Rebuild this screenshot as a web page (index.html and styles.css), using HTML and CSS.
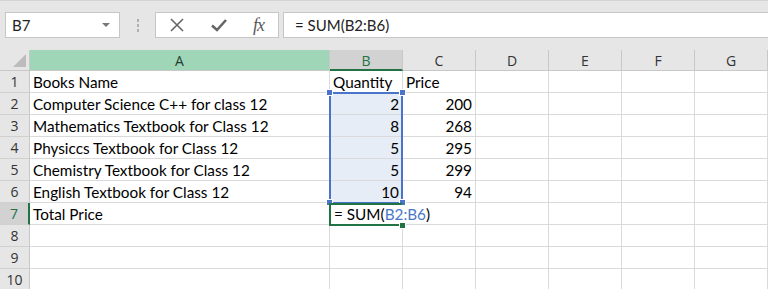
FILE: index.html
```html
<!DOCTYPE html>
<html lang="en">
<head>
	<meta charset="UTF-8">
	<title>Book sheet</title>
	<link rel="stylesheet" href="styles.css">
</head>
<body>

<div class="toolbar">
	<div class="name-box">
		<span>B7</span>
		<span class="drop"></span>
	</div>
	<div class="grip"><i></i><i></i><i></i></div>
	<div class="fx-box">
		<svg width="16" height="16" viewBox="0 0 16 16"><path d="M2 2 L14 14 M14 2 L2 14" stroke="#666" stroke-width="1.6" fill="none"/></svg>
		<svg width="18" height="16" viewBox="0 0 18 16"><path d="M2 8.5 L7 13 L16 3" stroke="#666" stroke-width="2.6" fill="none"/></svg>
		<span class="fx">fx</span>
	</div>
	<div class="formula">= SUM(B2:B6)</div>
</div>

<div class="sheet">
	<div class="grid">
		<!-- header row -->
		<div class="corner"><span class="tri"></span></div>
		<div class="colhead colA">A</div>
		<div class="colhead active">B</div>
		<div class="colhead">C</div>
		<div class="colhead">D</div>
		<div class="colhead">E</div>
		<div class="colhead">F</div>
		<div class="colhead">G</div>

		<div class="rowhead">1</div>
		<div class="cell">Books Name</div>
		<div class="cell">Quantity</div>
		<div class="cell">Price</div>
		<div class="cell"></div><div class="cell"></div><div class="cell"></div><div class="cell"></div>

		<div class="rowhead">2</div>
		<div class="cell">Computer Science C++ for class 12</div>
		<div class="cell num sel">2</div>
		<div class="cell num">200</div>
		<div class="cell"></div><div class="cell"></div><div class="cell"></div><div class="cell"></div>

		<div class="rowhead">3</div>
		<div class="cell">Mathematics Textbook for Class 12</div>
		<div class="cell num sel">8</div>
		<div class="cell num">268</div>
		<div class="cell"></div><div class="cell"></div><div class="cell"></div><div class="cell"></div>

		<div class="rowhead">4</div>
		<div class="cell">Physiccs Textbook for Class 12</div>
		<div class="cell num sel">5</div>
		<div class="cell num">295</div>
		<div class="cell"></div><div class="cell"></div><div class="cell"></div><div class="cell"></div>

		<div class="rowhead">5</div>
		<div class="cell">Chemistry Textbook for Class 12</div>
		<div class="cell num sel">5</div>
		<div class="cell num">299</div>
		<div class="cell"></div><div class="cell"></div><div class="cell"></div><div class="cell"></div>

		<div class="rowhead">6</div>
		<div class="cell">English Textbook for Class 12</div>
		<div class="cell num sel">10</div>
		<div class="cell num">94</div>
		<div class="cell"></div><div class="cell"></div><div class="cell"></div><div class="cell"></div>

		<div class="rowhead active">7</div>
		<div class="cell">Total Price</div>
		<div class="cell editing"><span class="entry">= SUM(<span class="ref">B2:B6</span>)</span></div>
		<div class="cell"></div>
		<div class="cell"></div><div class="cell"></div><div class="cell"></div><div class="cell"></div>

		<div class="rowhead">8</div>
		<div class="cell"></div><div class="cell"></div><div class="cell"></div><div class="cell"></div><div class="cell"></div><div class="cell"></div><div class="cell"></div>

		<div class="rowhead">9</div>
		<div class="cell"></div><div class="cell"></div><div class="cell"></div><div class="cell"></div><div class="cell"></div><div class="cell"></div><div class="cell"></div>

		<div class="rowhead">10</div>
		<div class="cell"></div><div class="cell"></div><div class="cell"></div><div class="cell"></div><div class="cell"></div><div class="cell"></div><div class="cell"></div>
	</div>

	<!-- selection outlines drawn over the cells -->
	<div class="grid overlay">
		<div class="range-box">
			<i class="h tl"></i><i class="h tr"></i><i class="h bl"></i><i class="h br"></i>
		</div>
		<div class="active-box"><i class="h br"></i></div>
	</div>
</div>

</body>
</html>
```

FILE: styles.css
```css
body {
	margin: 0;
	width: 768px;
	height: 289px;
	overflow: hidden;
	background: #e6e6e6;
	font-family: Lato, "Liberation Sans", sans-serif;
}
.toolbar {
	height: 50px;
	border-top: 1px solid #d4d4d4;
	box-sizing: border-box;
	display: flex;
	align-items: center;
	padding: 11px 0 12px 5px;
}
.name-box {
	width: 115px;
	height: 26px;
	box-sizing: border-box;
	background: #fff;
	border: 1px solid #c6c6c6;
	display: flex;
	align-items: center;
	justify-content: space-between;
	padding: 0 9px 0 6px;
	font-size: 15px;
	color: #222;
}
.drop {
	width: 0;
	height: 0;
	border-left: 4px solid transparent;
	border-right: 4px solid transparent;
	border-top: 4px solid #777;
}
.grip {
	width: 35px;
	display: flex;
	flex-direction: column;
	align-items: center;
	gap: 2px;
}
.grip i {
	width: 2px;
	height: 3px;
	background: #b0b0b0;
}
.fx-box {
	width: 124px;
	height: 26px;
	box-sizing: border-box;
	background: #fff;
	border: 1px solid #c6c6c6;
	display: flex;
	align-items: center;
	justify-content: space-between;
	padding: 0 14px 0 13px;
}
.fx {
	font-family: "Liberation Serif", serif;
	font-style: italic;
	font-size: 18px;
	color: #5a5a5a;
	letter-spacing: -1px;
}
.formula {
	flex: 1;
	height: 26px;
	box-sizing: border-box;
	margin-left: 4px;
	background: #fff;
	border: 1px solid #c6c6c6;
	border-right: none;
	padding: 3px 0 0 11px;
	font-size: 15px;
	color: #222;
}
.sheet {
	position: relative;
}
.grid {
	display: grid;
	grid-template-columns: 30px 300px 73px 73px 73px 73px 73px 73px;
	grid-template-rows: 21px repeat(10, 22px);
	font-size: 15.3px;
}
.corner, .colhead, .rowhead {
	background: #e6e6e6;
	color: #333;
	font-family: "Open Sans", sans-serif;
	font-size: 14px;
	display: flex;
	align-items: center;
	justify-content: center;
	box-sizing: border-box;
}
.corner {
	position: relative;
	border-right: 1px solid #c8c8c8;
	border-bottom: 1px solid #c8c8c8;
}
.tri {
	position: absolute;
	right: 3px;
	bottom: 3px;
	width: 0;
	height: 0;
	border-left: 13px solid transparent;
	border-bottom: 13px solid #bcbcbc;
}
.colhead {
	border-right: 1px solid #c8c8c8;
	border-bottom: 1px solid #c8c8c8;
	padding-top: 1px;
}
.colA {
	background: #a0d6b8;
	color: #1f3d2c;
}
.colhead.active {
	background: #d2d2d2;
	color: #217346;
	border-bottom: 2px solid #217346;
}
.rowhead {
	border-right: 1px solid #c8c8c8;
	border-bottom: 1px solid #d0d0d0;
}
.rowhead.active {
	background: #d2d2d2;
	color: #217346;
	border-right: 2px solid #217346;
}
.cell {
	background: #fff;
	border-right: 1px solid #dadada;
	border-bottom: 1px solid #dadada;
	box-sizing: border-box;
	padding: 1px 3px 0 3px;
	line-height: 20px;
	white-space: nowrap;
	color: #000;
}
.num {
	text-align: right;
}
.sel {
	background: #e7edf7;
}
.editing {
	padding-left: 4px;
	border-right-color: transparent;
}
.entry {
	position: relative;
	z-index: 3;
}
.ref {
	color: #4a78c8;
}
.overlay {
	position: absolute;
	left: 0;
	top: 0;
	pointer-events: none;
	z-index: 2;
}
.range-box {
	grid-column: 3;
	grid-row: 3 / span 5;
	position: relative;
	margin: -1px 0 0 -1px;
	border: 2px solid #4a74c9;
	border-bottom-width: 1px;
	width: 74px;
	box-sizing: border-box;
}
.active-box {
	grid-column: 3;
	grid-row: 8;
	position: relative;
	margin: 0 0 -1px -1px;
	border: 2px solid #217346;
	border-right-color: transparent;
	box-sizing: border-box;
	width: 74px;
	height: 23px;
}
.h {
	position: absolute;
	width: 5px;
	height: 5px;
	background: #4a74c9;
	border: 1px solid #fff;
}
.tl { left: -5px; top: -5px; }
.tr { right: -5px; top: -5px; }
.bl { left: -5px; bottom: -4px; }
.range-box .br { right: -5px; bottom: -4px; }
.active-box .h {
	background: #217346;
	right: -5px;
	bottom: -5px;
}
```
